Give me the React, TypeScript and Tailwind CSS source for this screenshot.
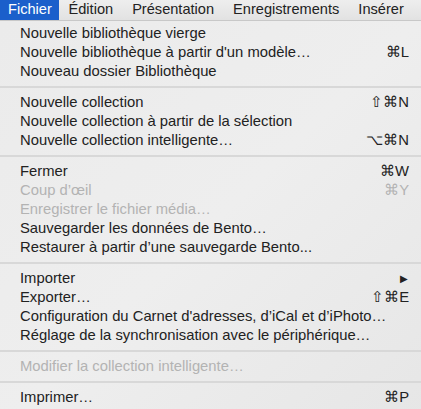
import React from 'react';

type Item =
    | { kind: 'item'; label: string; shortcut?: string; disabled?: boolean; submenu?: boolean }
    | { kind: 'sep' };

const items: Item[] = [
    { kind: 'item', label: 'Nouvelle bibliothèque vierge' },
    { kind: 'item', label: "Nouvelle bibliothèque à partir d'un modèle…", shortcut: '⌘L' },
    { kind: 'item', label: 'Nouveau dossier Bibliothèque' },
    { kind: 'sep' },
    { kind: 'item', label: 'Nouvelle collection', shortcut: '⇧⌘N' },
    { kind: 'item', label: 'Nouvelle collection à partir de la sélection' },
    { kind: 'item', label: 'Nouvelle collection intelligente…', shortcut: '⌥⌘N' },
    { kind: 'sep' },
    { kind: 'item', label: 'Fermer', shortcut: '⌘W' },
    { kind: 'item', label: 'Coup d’œil', shortcut: '⌘Y', disabled: true },
    { kind: 'item', label: 'Enregistrer le fichier média…', disabled: true },
    { kind: 'item', label: 'Sauvegarder les données de Bento…' },
    { kind: 'item', label: 'Restaurer à partir d’une sauvegarde Bento...' },
    { kind: 'sep' },
    { kind: 'item', label: 'Importer', submenu: true },
    { kind: 'item', label: 'Exporter…', shortcut: '⇧⌘E' },
    { kind: 'item', label: "Configuration du Carnet d'adresses, d’iCal et d’iPhoto…" },
    { kind: 'item', label: 'Réglage de la synchronisation avec le périphérique…' },
    { kind: 'sep' },
    { kind: 'item', label: 'Modifier la collection intelligente…', disabled: true },
    { kind: 'sep' },
    { kind: 'item', label: 'Imprimer…', shortcut: '⌘P' },
];

const menus = ['Fichier', 'Édition', 'Présentation', 'Enregistrements', 'Insérer'];

export default function App() {
    return (
        <div className="w-[421px] h-[409px] overflow-hidden bg-[#ececec] text-[14.8px] text-[#222] font-['Helvetica_Neue','Liberation_Sans',Arial,sans-serif]">
            <div className="h-[21px] flex items-stretch bg-gradient-to-b from-[#eeeeee] to-[#e2e2e2] border-b border-[#c8c8c8] text-[14.6px]">
                {menus.map((m, i) => (
                    <div
                        key={m}
                        className={
                            i === 0
                                ? 'pl-[8px] flex items-center bg-[#1b5fcb] text-white w-[59px]'
                                : 'px-[9.5px] flex items-center'
                        }
                    >
                        {m}
                    </div>
                ))}
            </div>
            <div className="pt-[3px] bg-gradient-to-br from-[#ebebeb] via-[#eeeeee] to-[#e6e6e6] h-full">
                {items.map((it, i) =>
                    it.kind === 'sep' ? (
                        <div key={i} className="h-[12px] flex items-center">
                            <div className="w-full h-[2px] bg-[#d8d8d8]" />
                        </div>
                    ) : (
                        <div
                            key={i}
                            className={`h-[19px] pl-[20px] pr-[12px] flex items-center justify-between ${it.disabled ? 'text-[#b3b3b3]' : ''}`}
                        >
                            <span className="whitespace-nowrap">{it.label}</span>
                            {it.shortcut && <span className="whitespace-nowrap">{it.shortcut}</span>}
                            {it.submenu && <span className="text-[10px] pr-[1px]">▶</span>}
                        </div>
                    )
                )}
            </div>
        </div>
    );
}
